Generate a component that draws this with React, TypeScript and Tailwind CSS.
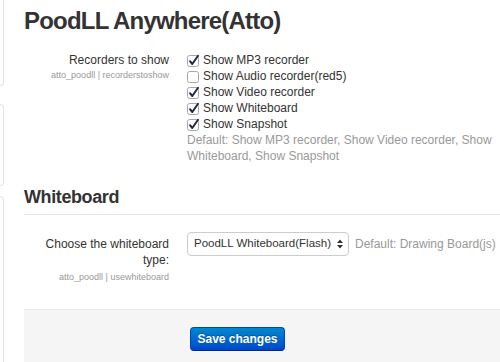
const recorders = [
  {label: "Show MP3 recorder", checked: true},
  {label: "Show Audio recorder(red5)", checked: false},
  {label: "Show Video recorder", checked: true},
  {label: "Show Whiteboard", checked: true},
  {label: "Show Snapshot", checked: true}
]

function Check({checked}: {checked: boolean}) {
  return (
    <svg width="13" height="13" viewBox="0 0 13 13" className="shrink-0">
      <rect x="0.5" y="1.5" width="11" height="11" rx="2" fill="#fff" stroke="#a6a6a6"/>
      {checked && (
        <path d="M3 7.2 L5.3 10 L11 1.8" fill="none" stroke="#1e2b45" strokeWidth="2" strokeLinecap="round" strokeLinejoin="round"/>
      )}
    </svg>
  )
}

function SelectArrows() {
  return (
    <svg width="6" height="10" viewBox="0 0 6 10">
      <path d="M0 4 L3 0.5 L6 4 Z" fill="#333"/>
      <path d="M0 6 L3 9.5 L6 6 Z" fill="#333"/>
    </svg>
  )
}

export default function App() {
  return (
    <div className="flex h-[362px] w-[500px] overflow-hidden bg-white font-['Liberation_Sans',Arial,sans-serif] text-[#333]">
      {/* side blocks */}
      <div className="flex w-[4px] shrink-0 flex-col">
        <div className="h-[86px] shrink-0 rounded-br-[4px] border-r border-b border-[#e3e3e3]"/>
        <div className="mt-[18px] h-[82px] shrink-0 rounded-r-[4px] border-y border-r border-[#e3e3e3]"/>
        <div className="mt-[10px] h-[200px] shrink-0 rounded-tr-[4px] border-t border-r border-[#e3e3e3]"/>
      </div>

      <main className="ml-[20px] flex flex-1 flex-col">
        <h2 className="pt-[7px] text-[24px] leading-[28px] font-bold tracking-[-0.8px]">PoodLL Anywhere(Atto)</h2>

        <div className="mt-[17px] flex">
          <div className="w-[145px] shrink-0 text-right">
            <div className="text-[12px] leading-[16px]">Recorders to show</div>
            <div className="text-[9px] leading-[14px] text-[#999]">atto_poodll | recorderstoshow</div>
          </div>
          <div className="ml-[18px] flex-1 text-[12px] leading-[16px]">
            {recorders.map((r) => (
              <div key={r.label} className="flex h-[16px] items-center gap-[3px]">
                <Check checked={r.checked}/>
                <span>{r.label}</span>
              </div>
            ))}
            <div className="pr-[4px] text-[#999]">
              Default: Show MP3 recorder, Show Video recorder, Show Whiteboard, Show Snapshot
            </div>
          </div>
        </div>

        <h3 className="mt-[22px] border-b border-[#e5e5e5] pb-[6px] text-[18px] leading-[22px] font-bold tracking-[-0.4px]">Whiteboard</h3>

        <div className="mt-[17px] flex items-start">
          <div className="w-[145px] shrink-0 pt-[4px] text-right">
            <div className="text-[12px] leading-[16px]">Choose the whiteboard type:</div>
            <div className="mt-[2px] text-[9px] leading-[14px] text-[#999]">atto_poodll | usewhiteboard</div>
          </div>
          <div className="ml-[18px] flex items-center gap-[6px]">
            <div className="flex h-[24px] w-[162px] items-center justify-between rounded-[4px] border border-[#ccc] bg-white pr-[5px] pl-[6px] text-[11.5px]">
              <span>PoodLL Whiteboard(Flash)</span>
              <SelectArrows/>
            </div>
            <span className="text-[12px] text-[#999]">Default: Drawing Board(js)</span>
          </div>
        </div>

        <div className="mt-[25px] flex-1 border-t border-[#e5e5e5] bg-[#f5f5f5] pt-[16px] pl-[166px]">
          <button className="h-[24px] w-[95px] rounded-[4px] border border-[#0044cc] border-b-[#002a80] bg-gradient-to-b from-[#0088cc] to-[#0044cc] text-[12px] font-bold text-white [text-shadow:0_-1px_0_rgba(0,0,0,0.25)]">
            Save changes
          </button>
        </div>
      </main>
    </div>
  )
}
